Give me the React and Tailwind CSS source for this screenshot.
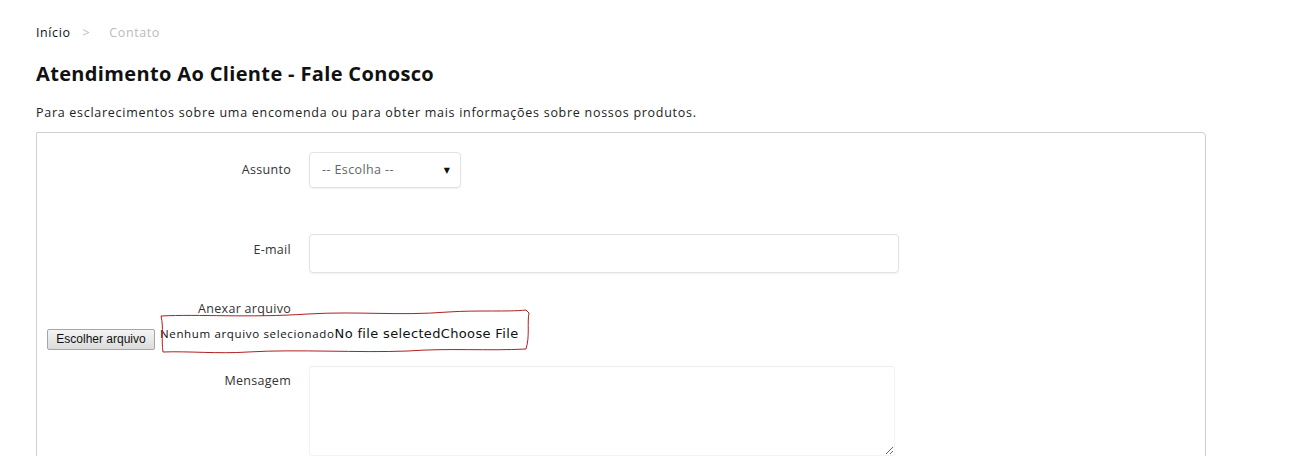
import React from "react";

function Label({ children, className = "" }) {
  return (
    <label className={`w-[244px] shrink-0 text-right text-[12.5px] tracking-[0.3px] text-[#333] ${className}`}>
      {children}
    </label>
  );
}

export default function App() {
  return (
    <div className="min-h-screen bg-white font-['Open_Sans','DejaVu_Sans',sans-serif] text-[#111]">
      <div className="w-[1170px] ml-[36px] pt-[23px]">
        <nav className="flex items-center text-[12.5px] tracking-[0.6px] leading-5">
          <span className="text-[#111]">Início</span>
          <span className="ml-[12px] text-[#bbb]">&gt;</span>
          <span className="ml-[19px] text-[#bbb]">Contato</span>
        </nav>

        <h1 className="mt-[19px] text-[20px] font-bold leading-6 tracking-[0.35px] text-[#111]">
          Atendimento Ao Cliente - Fale Conosco
        </h1>

        <p className="mt-[17px] text-[12.5px] tracking-[0.72px] leading-5 text-[#222]">
          Para esclarecimentos sobre uma encomenda ou para obter mais informações sobre nossos produtos.
        </p>

        <div className="mt-[9px] h-[400px] rounded-tr-[4px] border border-[#cfcfcf] pl-[10px] pt-[19px]">
          <div className="flex">
            <Label className="pt-[9px]">Assunto</Label>
            <div className="ml-[18px] flex h-[36px] w-[152px] items-center justify-between rounded-[4px] border border-[#e2e2e2] px-3 shadow-[0_1px_2px_rgba(0,0,0,0.06)]">
              <span className="text-[12.5px] tracking-[0.4px] text-[#666]">-- Escolha --</span>
              <span className="-mr-[2px] text-[8px] text-[#111]">▼</span>
            </div>
          </div>

          <div className="mt-[46px] flex">
            <Label className="pt-[7px]">E-mail</Label>
            <input
              type="text"
              className="ml-[18px] h-[39px] w-[590px] rounded-[4px] border border-[#e2e2e2] shadow-[0_1px_2px_rgba(0,0,0,0.06)] outline-none"
            />
          </div>

          <div className="mt-[27px] flex">
            <Label>Anexar arquivo</Label>
          </div>

          <div className="relative mt-[10px] flex items-center">
            <button className="h-[21px] w-[108px] rounded-[2px] border border-[#a6a6a6] bg-gradient-to-b from-[#f4f4f4] to-[#dcdcdc] font-['Liberation_Sans',Arial,sans-serif] text-[12px] text-[#111]">
              Escolher arquivo
            </button>
            <span className="ml-[5px] -mt-[12px] text-[11.5px] tracking-[0.65px] text-[#111]">
              Nenhum arquivo selecionado
            </span>
            <span className="-mt-[12px] font-['DejaVu_Sans',sans-serif] text-[13px] tracking-[0.35px] text-[#111]">
              No file selectedChoose File
            </span>
            <svg
              className="pointer-events-none absolute left-[111px] top-[-21px]"
              width="376"
              height="48"
              viewBox="0 0 376 48"
              fill="none"
            >
              <path
                d="M3 8 C40 6 90 10 150 6 C200 3 240 8 290 4 C320 2 350 4 368 2 L371 5 C369 15 372 28 368 41 C330 43 290 40 250 43 C200 45 140 41 90 44 C60 46 30 43 5 44 C3 32 6 20 3 8 Z"
                stroke="#b02020"
                strokeWidth="1"
              />
            </svg>
          </div>

          <div className="mt-[16px] flex">
            <Label className="pt-[6px]">Mensagem</Label>
            <textarea className="ml-[18px] h-[90px] w-[586px] rounded-[3px] border border-[#f3f3f3] border-t-[#ececec] outline-none" />
          </div>
        </div>
      </div>
    </div>
  );
}
